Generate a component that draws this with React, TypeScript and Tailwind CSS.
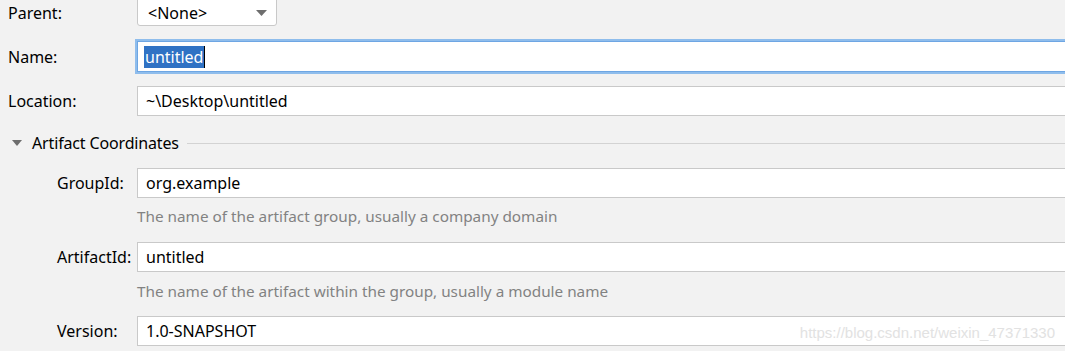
import React from "react";

const font = { fontFamily: '"Noto Sans", "Open Sans", sans-serif' };

function Field({ children }: { children: React.ReactNode }) {
  return (
    <div className="flex-1 h-[30px] bg-white border border-[#c9c9c9] border-r-0 flex items-center pl-[8px] text-[16px] text-black">
      {children}
    </div>
  );
}

export default function App() {
  return (
    <div
      className="w-[1065px] h-[351px] overflow-hidden bg-[#f2f2f2] relative text-[16px] text-black"
      style={font}
    >
      <div className="flex flex-col -mt-[4px]">
        {/* Parent */}
        <div className="flex items-center h-[30px]">
          <div className="w-[137px] pl-[8px] pt-[4px]">Parent:</div>
          <div className="w-[140px] h-[30px] bg-white border border-[#c9c9c9] rounded-[3px] flex items-center justify-between pl-[10px] pr-[9px] pt-[4px]">
            <span>&lt;None&gt;</span>
            <svg width="11" height="6" viewBox="0 0 11 6">
              <path d="M0 0 H11 L5.5 6 Z" fill="#6e6e6e" />
            </svg>
          </div>
        </div>

        {/* Name */}
        <div className="flex items-center h-[35px] mt-[13px]">
          <div className="w-[135px] pl-[8px]">Name:</div>
          <div className="flex-1 h-[35px] border-[2px] border-[#8fbdec] border-r-0 bg-white">
            <div className="h-full border border-[#6ea6e3] border-r-0 flex items-center pl-[6px]">
              <span className="bg-[#2f72c4] text-white leading-[22px] h-[22px] px-[1px]">untitled</span>
              <span className="w-[1px] h-[22px] bg-black" />
            </div>
          </div>
        </div>

        {/* Location */}
        <div className="flex items-center h-[30px] mt-[12px]">
          <div className="w-[137px] pl-[8px]">Location:</div>
          <Field>~\Desktop\untitled</Field>
        </div>

        {/* Artifact Coordinates */}
        <div className="flex items-center h-[24px] mt-[15px]">
          <svg width="10" height="6" viewBox="0 0 10 6" className="ml-[12px]">
            <path d="M0 0 H10 L5 6 Z" fill="#6e6e6e" />
          </svg>
          <span className="ml-[10px] tracking-[-0.15px]">Artifact Coordinates</span>
          <div className="flex-1 h-[1px] bg-[#d3d3d3] ml-[8px]" />
        </div>

        {/* GroupId */}
        <div className="flex items-center h-[30px] mt-[13px]">
          <div className="w-[137px] pl-[57px]">GroupId:</div>
          <Field>org.example</Field>
        </div>
        <div className="pl-[137px] h-[20px] mt-[8px] text-[15.3px] text-[#828282] leading-[20px]">
          The name of the artifact group, usually a company domain
        </div>

        {/* ArtifactId */}
        <div className="flex items-center h-[30px] mt-[16px]">
          <div className="w-[137px] pl-[57px]">ArtifactId:</div>
          <Field>untitled</Field>
        </div>
        <div className="pl-[137px] h-[20px] mt-[9px] text-[15.3px] text-[#828282] leading-[20px]">
          The name of the artifact within the group, usually a module name
        </div>

        {/* Version */}
        <div className="flex items-center h-[30px] mt-[15px]">
          <div className="w-[137px] pl-[57px]">Version:</div>
          <div className="flex-1 h-[30px] bg-white border border-[#c9c9c9] border-r-0 flex items-center pl-[8px] text-[16px] text-black relative">
            1.0-SNAPSHOT
            <span
              className="absolute right-[10px] top-[5px] text-[15px] text-[#e2e2e2]"
              style={{ fontFamily: '"Liberation Sans", Arial, sans-serif' }}
            >
              https://blog.csdn.net/weixin_47371330
            </span>
          </div>
        </div>
      </div>
    </div>
  );
}
